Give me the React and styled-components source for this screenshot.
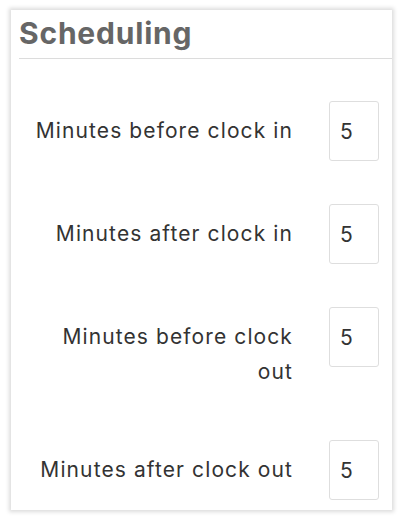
import React from "react";
import styled, { createGlobalStyle } from "styled-components";

const GlobalStyle = createGlobalStyle`
  html, body {
    margin: 0;
    padding: 0;
    background: #ffffff;
  }
  body {
    font-family: Inter, "Liberation Sans", sans-serif;
  }
`;

const Page = styled.div`
  width: 400px;
  height: 520px;
  padding: 10px 8px 10px 11px;
  box-sizing: border-box;
`;

const Card = styled.section`
  height: 100%;
  box-sizing: border-box;
  background: #fff;
  box-shadow: 0 0 4px 2px rgba(0, 0, 0, 0.14);
  padding: 0 0 0 8px;
`;

const Title = styled.h2`
  margin: 0;
  padding: 8px 0 9px;
  font-size: 30px;
  font-weight: 700;
  letter-spacing: 0.8px;
  color: #666;
  line-height: 31px;
  border-bottom: 1px solid #dcdcdc;
`;

const Form = styled.div`
  display: flex;
  flex-direction: column;
  gap: 43px;
  padding: 42px 13px 0 0;
`;

const Row = styled.div`
  display: flex;
  align-items: flex-start;
  justify-content: flex-end;
  gap: 36px;
`;

const Label = styled.label`
  max-width: 262px;
  padding: 12px 0 8px;
  text-align: right;
  font-size: 21px;
  letter-spacing: 1.1px;
  line-height: 35px;
  color: #333;
`;

const Input = styled.input`
  flex: none;
  width: 50px;
  height: 60px;
  box-sizing: border-box;
  border: 1px solid #dedede;
  border-radius: 3px;
  padding: 0 0 0 10px;
  font-family: inherit;
  font-size: 21px;
  color: #333;
  background: #fff;
  outline: none;
`;

const fields = [
  "Minutes before clock in",
  "Minutes after clock in",
  "Minutes before clock out",
  "Minutes after clock out",
];

export default function App() {
  return (
    <>
      <GlobalStyle />
      <Page>
        <Card>
          <Title>Scheduling</Title>
          <Form>
            {fields.map((f) => (
              <Row key={f}>
                <Label>{f}</Label>
                <Input defaultValue="5" />
              </Row>
            ))}
          </Form>
        </Card>
      </Page>
    </>
  );
}
